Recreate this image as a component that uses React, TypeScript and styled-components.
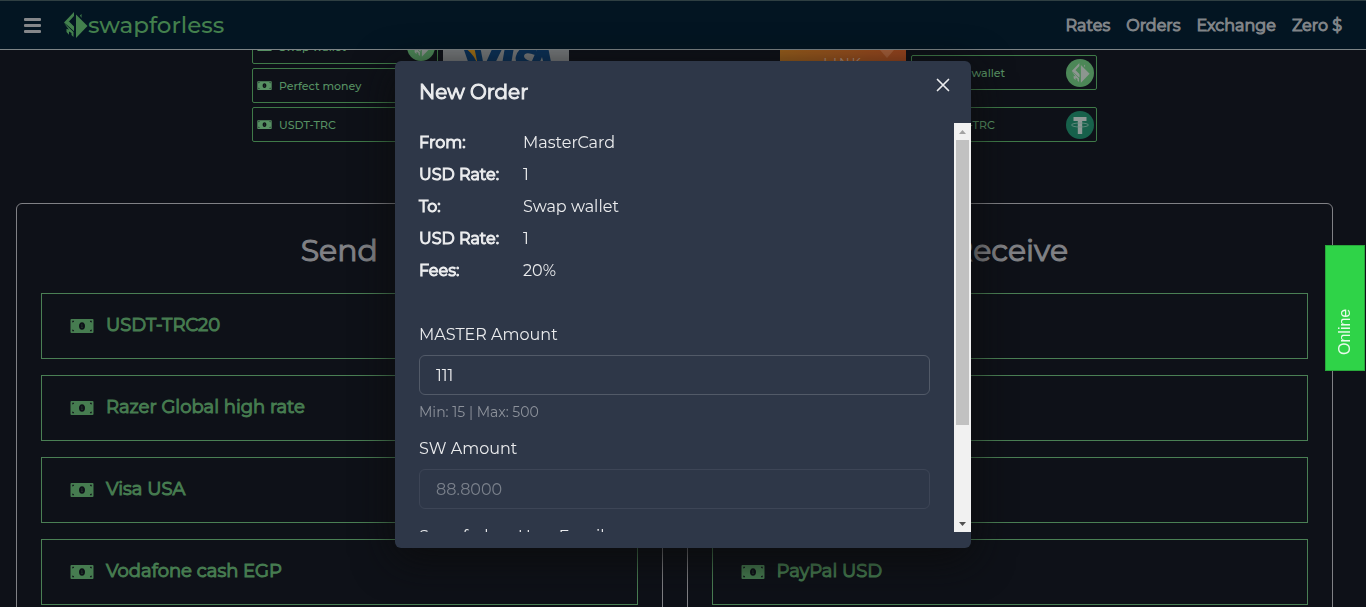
import React from "react";
import styled, { createGlobalStyle, css } from "styled-components";

const GlobalStyle = createGlobalStyle`
  * { box-sizing: border-box; }
  body {
    margin: 0;
    overflow: hidden;
    background: #0e1118;
    color: #808185;
    font-family: Montserrat, Inter, "Open Sans", sans-serif;
    font-size: 16px;
    line-height: 24px;
  }
  h1, h2, p, ul, dl, dd { margin: 0; padding: 0; }
  ul { list-style: none; }
  button, input { font: inherit; color: inherit; }
`;

const strong = css`
  font-weight: 400;
  -webkit-text-stroke: 1px currentColor;
`;

const Page = styled.div`
  height: 100vh;
  overflow: hidden;
`;

const Header = styled.header`
  display: flex;
  align-items: center;
  height: 50px;
  padding: 0 24px;
  background: #031522;
  border-top: 1px solid #2f3f42;
  border-bottom: 1px solid #7d8486;
`;

const MenuButton = styled.button`
  display: flex;
  padding: 0;
  margin-right: 22px;
  border: 0;
  background: none;
`;

const Brand = styled.a`
  display: flex;
  align-items: center;
  color: #43804d;
  font-size: 23px;
  font-weight: 500;
  text-decoration: none;
`;

const Nav = styled.nav`
  display: flex;
  gap: 16px;
  margin-left: auto;
  padding-top: 2px;
`;

const NavLink = styled.a`
  color: #808488;
  ${strong}
  text-decoration: none;
`;

const Main = styled.main`
  padding-right: 17px;
`;

const Hero = styled.section`
  display: flex;
  justify-content: center;
  align-items: flex-end;
  gap: 211px;
  height: 92px;
  overflow: hidden;
`;

const HeroGroup = styled.div`
  display: flex;
  align-items: flex-end;
  gap: 5px;
`;

const CoinList = styled.ul<{ $gap: number }>`
  display: flex;
  flex-direction: column;
  gap: ${(p) => p.$gap}px;
  width: 186px;
`;

const Coin = styled.li`
  display: flex;
  align-items: center;
  gap: 7px;
  height: 35px;
  padding: 0 2px 0 4px;
  border: 1px solid #3f7a48;
  border-radius: 2px;
  color: #579163;
  font-size: 11px;
  font-weight: 500;
`;

const CoinBadge = styled.span`
  display: flex;
  margin-left: auto;
`;

const CardArt = styled.div`
  display: flex;
  width: 126px;
  height: 112px;
`;

const Panels = styled.div`
  display: grid;
  grid-template-columns: 1fr 1fr;
  gap: 24px;
  padding: 61px 16px 24px;
`;

const Panel = styled.section`
  padding: 24px;
  border: 1px solid #808185;
  border-radius: 6px;
`;

const PanelTitle = styled.h2`
  margin-bottom: 19px;
  font-size: 30px;
  line-height: 46px;
  ${strong}
  text-align: center;
`;

const Options = styled.ul`
  display: flex;
  flex-direction: column;
  gap: 16px;
`;

const Option = styled.button`
  display: flex;
  align-items: center;
  gap: 12px;
  width: 100%;
  height: 66px;
  padding: 0 28px;
  border: 1px solid #4a7f54;
  background: none;
  color: #467c50;
  font-size: 18px;
  ${strong}
`;

const OptionName = styled.span`
  padding-bottom: 2px;
`;

const ChatTab = styled.button`
  position: fixed;
  top: 245px;
  right: 1px;
  width: 40px;
  height: 126px;
  padding: 15px 0;
  border: 1px solid #28a83b;
  background: #2fd348;
  color: #e9fbec;
  font-family: "Liberation Sans", Arial, sans-serif;
  font-size: 16px;
  writing-mode: vertical-rl;
  transform: rotate(180deg);
  text-align: left;
`;

const Backdrop = styled.div`
  position: fixed;
  inset: 0;
  display: flex;
  justify-content: center;
  align-items: flex-start;
  padding: 61px 16px 59px;
  pointer-events: none;
`;

const Dialog = styled.section`
  display: flex;
  flex-direction: column;
  width: 100%;
  max-width: 576px;
  max-height: 100%;
  padding-bottom: 16px;
  border-radius: 6px;
  background: #2e3748;
  color: #ebecee;
  box-shadow: 0 10px 40px rgba(12, 12, 12, 0.9);
  pointer-events: auto;
`;

const DialogHeader = styled.header`
  display: flex;
  flex: none;
  justify-content: space-between;
  align-items: flex-start;
  height: 62px;
  padding: 16px 20px 16px 24px;
`;

const DialogTitle = styled.h1`
  font-size: 20px;
  line-height: 30px;
  ${strong}
`;

const CloseButton = styled.button`
  display: flex;
  padding: 0;
  border: 0;
  background: none;
`;

const ScrollArea = styled.div`
  display: flex;
  flex: 1;
  min-height: 0;
`;

const DialogBody = styled.div`
  flex: 1;
  overflow: hidden;
  padding: 8px 24px;
`;

const Details = styled.dl`
  display: grid;
  grid-template-columns: 104px 1fr;
  row-gap: 8px;
  margin-bottom: 40px;
`;

const Term = styled.dt`
  ${strong}
`;

const Field = styled.div`
  display: flex;
  flex-direction: column;
  margin-bottom: 16px;
`;

const Label = styled.label`
  margin-bottom: 8px;
`;

const Input = styled.input`
  width: 100%;
  height: 40px;
  padding: 0 16px;
  border: 1px solid #525a68;
  border-radius: 6px;
  outline: 0;
  background: none;
  &:disabled {
    border-color: #3d4556;
    color: #7a808b;
  }
`;

const Hint = styled.p`
  margin-top: 8px;
  color: #8d929b;
  font-size: 14px;
  line-height: 18px;
`;

const ScrollTrack = styled.div`
  display: flex;
  flex-direction: column;
  width: 17px;
  background: #f1f1f1;
`;

const ScrollThumb = styled.div`
  height: 285px;
  margin: 0 2px;
  background: #c1c1c1;
`;

const ScrollArrow = styled.span<{ $end?: boolean }>`
  display: flex;
  justify-content: center;
  align-items: center;
  height: 17px;
  margin-top: ${(p) => (p.$end ? "auto" : "0")};
`;

const Bill = ({ width = 24 }: { width?: number }) => (
  <svg width={width} height={width} viewBox="0 0 24 24" aria-hidden="true">
    <path
      fill="currentColor"
      fillRule="evenodd"
      d="M1.500 5h21q1 0 1 1v12q0 1-1 1h-21q-1 0-1-1V6q0-1 1-1zM12 8.200c-2 0-3 1.800-3 3.800s1 3.800 3 3.800 3-1.800 3-3.800-1-3.800-3-3.800zM2.300 6.700v1.800q1.800 0 1.800-1.800zM21.700 6.700h-1.800q0 1.800 1.800 1.800zM2.300 17.300h1.800q0-1.800-1.800-1.800zM21.700 17.300v-1.800q-1.800 0-1.800 1.800z"
    />
    <path fill="currentColor" d="M11.300 10.200h1.100v3h.6v.7h-2v-.7h.5v-2h-.5z" opacity=".35" />
  </svg>
);

const SwapShape = () => (
  <>
    <path d="M13 2.500 24.500 14 13 26z" />
    <path d="M11 0v4L5.500 10l5.500 5.500v3.500L1 10.500z" />
    <path d="M5.800 9.200 11 14.500V19L3.500 11.500zM1 11l9.500 9v5l-2-2v-2L6 19.500v3.200L3.500 20v-3.200l2.500 1z" />
    <path d="M17 3.500 18.500 2v4z" />
  </>
);

const SwapBadge = () => (
  <svg width="28" height="28" viewBox="0 0 28 28" aria-hidden="true">
    <circle cx="14" cy="14" r="14" fill="#4c8757" />
    <g fill="#8d9690" transform="translate(5 4) scale(.76)">
      <SwapShape />
    </g>
  </svg>
);

const TetherBadge = () => (
  <svg width="28" height="28" viewBox="0 0 28 28" aria-hidden="true">
    <circle cx="14" cy="14" r="14" fill="#17614b" />
    <path fill="#8e9996" d="M7.500 6h13v4h-4.300v13h-4.400V10H7.500z" />
    <ellipse cx="14" cy="14" rx="8.500" ry="2" fill="none" stroke="#6f8f85" strokeWidth=".8" />
  </svg>
);

const leftCoins = [
  { name: "Swap wallet", badge: <SwapBadge /> },
  { name: "Perfect money" },
  { name: "USDT-TRC", badge: <TetherBadge /> },
];
const rightCoins = [
  { name: "Swap wallet", badge: <SwapBadge /> },
  { name: "USDT-TRC", badge: <TetherBadge /> },
];
const sendOptions = ["USDT-TRC20", "Razer Global high rate", "Visa USA", "Vodafone cash EGP"];
const receiveOptions = ["Swap wallet", "USDT-TRC20", "Perfect money", "PayPal USD"];
const details = [
  ["From:", "MasterCard"],
  ["USD Rate:", "1"],
  ["To:", "Swap wallet"],
  ["USD Rate:", "1"],
  ["Fees:", "20%"],
];

type CoinItem = { name: string; badge?: React.ReactNode };

const Coins = ({ items, gap }: { items: CoinItem[]; gap: number }) => (
  <CoinList $gap={gap}>
    {items.map((c) => (
      <Coin key={c.name}>
        <Bill width={15} />
        {c.name}
        {c.badge && <CoinBadge>{c.badge}</CoinBadge>}
      </Coin>
    ))}
  </CoinList>
);

const OptionPanel = ({ title, items }: { title: string; items: string[] }) => (
  <Panel>
    <PanelTitle>{title}</PanelTitle>
    <Options>
      {items.map((name) => (
        <li key={name}>
          <Option type="button">
            <Bill />
            <OptionName>{name}</OptionName>
          </Option>
        </li>
      ))}
    </Options>
  </Panel>
);

export default function App() {
  return (
    <Page>
      <GlobalStyle />
      <Header>
        <MenuButton type="button" aria-label="Menu">
          <svg width="17" height="16" viewBox="0 0 17 16" fill="#85878a">
            <rect y="1" width="17" height="3" rx="1" />
            <rect y="7" width="17" height="3" rx="1" />
            <rect y="13" width="17" height="3" rx="1" />
          </svg>
        </MenuButton>
        <Brand href="#">
          <svg width="25" height="26" viewBox="0 0 25 26" fill="currentColor" aria-hidden="true">
            <SwapShape />
          </svg>
          swapforless
        </Brand>
        <Nav>
          {["Rates", "Orders", "Exchange", "Zero $"].map((t) => (
            <NavLink key={t} href="#">
              {t}
            </NavLink>
          ))}
        </Nav>
      </Header>
      <Main>
        <Hero>
          <HeroGroup>
            <Coins items={leftCoins} gap={4} />
            <CardArt>
              <svg width="126" height="112" viewBox="0 0 126 112" aria-hidden="true">
                <rect width="126" height="112" fill="#777a7c" />
                <path
                  fill="#0b3158"
                  d="M20 17h14q3 0 4 4l3 16 9-20h10L43 52H32zM62 17h9l-6 35h-9zM94 18l-2 7q-10-4-11 1 0 3 6 5 8 4 6 11-3 14-22 8l2-8q9 4 11 0 1-3-6-6-7-4-5-10 4-13 21-8zM95 17h10l7 35h-9l-1-6H91l-2 6h-9zM99 27l-5 12h8z"
                />
                <path fill="#a06f16" d="M18 16h8q5 0 6 5l3 15Q31 22 18 16z" />
              </svg>
            </CardArt>
          </HeroGroup>
          <HeroGroup>
            <CardArt>
              <svg width="126" height="112" viewBox="0 0 126 112" aria-hidden="true">
                <defs>
                  <linearGradient id="link">
                    <stop offset="0" stopColor="#9a5f1c" />
                    <stop offset="1" stopColor="#9a451f" />
                  </linearGradient>
                </defs>
                <rect width="126" height="112" fill="url(#link)" />
                <path fill="#a8603a" d="M100 20h14l-7 8z" />
                <text x="63" y="37" fill="#b69683" fontSize="13" letterSpacing="2" textAnchor="middle">
                  LINK
                </text>
              </svg>
            </CardArt>
            <Coins items={rightCoins} gap={17} />
          </HeroGroup>
        </Hero>
        <Panels>
          <OptionPanel title="Send" items={sendOptions} />
          <OptionPanel title="Receive" items={receiveOptions} />
        </Panels>
      </Main>
      <Backdrop>
        <Dialog role="dialog" aria-modal="true" aria-labelledby="dialog-title">
          <DialogHeader>
            <DialogTitle id="dialog-title">New Order</DialogTitle>
            <CloseButton type="button" aria-label="Close">
              <svg width="16" height="16" viewBox="0 0 16 16" stroke="currentColor" strokeWidth="1.700" strokeLinecap="round">
                <path d="M2.500 2.500l11 11M13.500 2.500l-11 11" />
              </svg>
            </CloseButton>
          </DialogHeader>
          <ScrollArea>
            <DialogBody>
              <Details>
                {details.map(([term, value], i) => (
                  <React.Fragment key={i}>
                    <Term>{term}</Term>
                    <dd>{value}</dd>
                  </React.Fragment>
                ))}
              </Details>
              <Field>
                <Label htmlFor="master">MASTER Amount</Label>
                <Input id="master" defaultValue="111" />
                <Hint>Min: 15 | Max: 500</Hint>
              </Field>
              <Field>
                <Label htmlFor="sw">SW Amount</Label>
                <Input id="sw" defaultValue="88.8000" disabled />
              </Field>
              <Field>
                <Label htmlFor="email">Swapforless User Email</Label>
                <Input id="email" />
              </Field>
            </DialogBody>
            <ScrollTrack aria-hidden="true">
              <ScrollArrow>
                <svg width="7" height="4" viewBox="0 0 7 4">
                  <path fill="#a3a3a3" d="M0 4 3.500 0 7 4z" />
                </svg>
              </ScrollArrow>
              <ScrollThumb />
              <ScrollArrow $end>
                <svg width="7" height="4" viewBox="0 0 7 4">
                  <path fill="#505050" d="M0 0h7L3.500 4z" />
                </svg>
              </ScrollArrow>
            </ScrollTrack>
          </ScrollArea>
        </Dialog>
      </Backdrop>
      <ChatTab type="button">Online</ChatTab>
    </Page>
  );
}
